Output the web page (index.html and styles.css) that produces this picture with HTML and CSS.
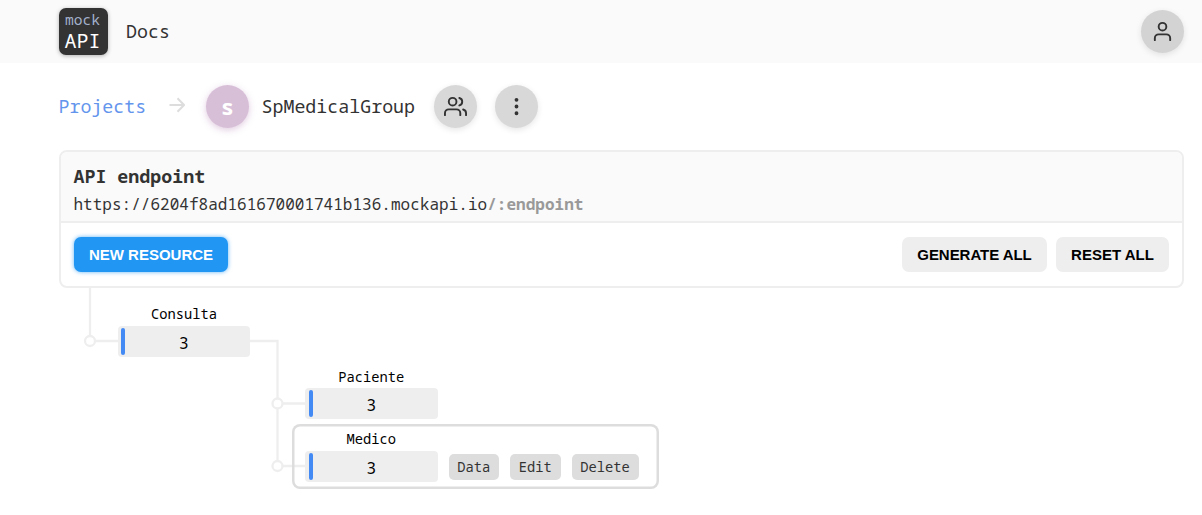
FILE: index.html
```html
<!DOCTYPE html>
<html lang="en">
<head>
<meta charset="utf-8">
<title>mockAPI</title>
<link rel="stylesheet" href="styles.css">
</head>
<body>
<header class="topbar">
  <a class="logo"><span class="logo-mock">mock</span><span class="logo-api">API</span></a>
  <a class="docs">Docs</a>
  <span class="round account">
    <svg width="23" height="23" viewBox="0 0 24 24" class="icon"><path d="M20 21v-2a4 4 0 0 0-4-4H8a4 4 0 0 0-4 4v2"/><circle cx="12" cy="7" r="4"/></svg>
  </span>
</header>
<nav class="crumbs">
  <a class="projects">Projects</a>
  <svg class="arrow" width="16" height="16" viewBox="0 0 16 16"><path d="M0.5 8H15M8.5 1.2L15 8L8.5 14.8"/></svg>
  <span class="round avatar">s</span>
  <span class="project-name">SpMedicalGroup</span>
  <span class="round team">
    <svg width="23" height="23" viewBox="0 0 24 24" class="icon"><path d="M17 21v-2a4 4 0 0 0-4-4H5a4 4 0 0 0-4 4v2"/><circle cx="9" cy="7" r="4"/><path d="M23 21v-2a4 4 0 0 0-3-3.87M16 3.13a4 4 0 0 1 0 7.75"/></svg>
  </span>
  <span class="round more">
    <svg width="23" height="23" viewBox="0 0 24 24" class="icon"><circle cx="12" cy="12" r="1"/><circle cx="12" cy="5" r="1"/><circle cx="12" cy="19" r="1"/></svg>
  </span>
</nav>
<main>
  <section class="panel">
    <div class="endpoint">
      <div class="endpoint-title">API endpoint</div>
      <div class="url">https://6204f8ad161670001741b136.mockapi.io<b>/:endpoint</b></div>
    </div>
    <div class="actions">
      <button class="btn primary">NEW RESOURCE</button>
      <button class="btn generate">GENERATE ALL</button>
      <button class="btn reset">RESET ALL</button>
    </div>
  </section>
  <section class="tree">
    <svg class="wire" width="59" height="70" viewBox="0 0 59 70"><path d="M31 0V48M36 53H59"/><circle cx="31" cy="53" r="5"/></svg>
    <div class="node root"><div class="name">Consulta</div><div class="count">3</div></div>
    <svg class="wire" width="55" height="200" viewBox="0 0 55 200"><path d="M0 53H27.5V110.5M32.5 115.5H55M27.5 120.5V173M32.5 178H55"/><circle cx="27.5" cy="115.5" r="5"/><circle cx="27.5" cy="178" r="5"/></svg>
    <div class="children">
      <div class="node paciente"><div class="name">Paciente</div><div class="count">3</div></div>
      <div class="selected">
        <div class="node"><div class="name">Medico</div><div class="count">3</div></div>
        <button class="tool">Data</button><button class="tool">Edit</button><button class="tool delete">Delete</button>
      </div>
    </div>
  </section>
</main>
</body>
</html>
```

FILE: styles.css
```css
* { box-sizing: border-box; }
body {
  margin: 0;
  background: #fff;
  color: #333;
  font-family: "Noto Sans Mono", "DejaVu Sans Mono", monospace;
  font-size: 18.3px;
}
.topbar {
  height: 63px;
  padding: 0 18px 0 59px;
  background: #fafafa;
  display: flex;
  align-items: center;
}
.logo {
  width: 49px;
  height: 47px;
  border-radius: 7px;
  background: #333;
  box-shadow: 0 1px 4px rgba(0, 0, 0, .3);
  display: flex;
  flex-direction: column;
  align-items: center;
  padding-right: 2px;
}
.logo-mock { font-size: 14.6px; line-height: 19px; margin-top: 2px; color: #a3b1cc; }
.logo-api { font-size: 20px; line-height: 24px; color: #fff; }
.docs { margin: -2px 0 0 18px; }
.round {
  width: 43px;
  height: 43px;
  border-radius: 50%;
  background: #d8d8d8;
  box-shadow: 0 2px 6px rgba(0, 0, 0, .1);
  display: flex;
  align-items: center;
  justify-content: center;
  flex: none;
}
.account { margin-left: auto; background: #d3d3d3; }
.icon {
  fill: none;
  stroke: #333;
  stroke-width: 2;
  stroke-linecap: round;
  stroke-linejoin: round;
}
.crumbs {
  height: 87px;
  padding-left: 58.5px;
  display: flex;
  align-items: center;
}
.projects { color: #6495ed; margin-top: -2px; width: 88px; }
.arrow { margin: -3px 21.5px 0 22px; fill: none; stroke: #ddd; stroke-width: 2; }
.avatar {
  background: #d8bfd8;
  box-shadow: 0 2px 7px rgba(216, 191, 216, .8);
  color: #fff;
  font-weight: bold;
  font-size: 21.5px;
}
.project-name { margin: -2px 0 0 12.5px; width: 172.5px; }
.more { margin-left: 18px; }
.panel {
  width: 1125px;
  height: 138px;
  margin-left: 59px;
  border: 2px solid #eee;
  border-radius: 8px;
  overflow: hidden;
}
.endpoint {
  height: 71px;
  padding: 11px 12.5px 0;
  background: #fafafa;
  border-bottom: 2px solid #eee;
}
.endpoint-title { font-weight: bold; line-height: 26px; }
.url { font-size: 16px; line-height: 30px; letter-spacing: .02px; }
.url b { color: #999; }
.actions { display: flex; padding: 14px 13px; }
.btn {
  height: 35px;
  border: 0;
  padding: 0;
  border-radius: 7px;
  font: bold 15px/35px "Liberation Sans", Arial, sans-serif;
  color: #000;
  background: #eee;
}
.primary { width: 154px; background: #2196f3; color: #fff; box-shadow: 0 0 4px rgba(33, 150, 243, .7); }
.generate { width: 145px; margin-left: auto; letter-spacing: -.05px; }
.reset { width: 113px; margin-left: 9px; }
.tree { display: flex; align-items: flex-start; padding-left: 59px; color: #000; }
.wire { fill: none; stroke: #eee; stroke-width: 2.3; flex: none; }
.node { width: 132.5px; flex: none; }
.root { width: 132px; margin-top: 16.5px; }
.name { height: 21px; line-height: 20px; font-size: 13.75px; text-align: center; }
.root .name, .selected .name { line-height: 18px; }
.count {
  height: 31px;
  border-radius: 4px;
  background: #eee;
  display: grid;
  grid-template: 27px / 4px 1fr 4px;
  padding: 2px 3.5px;
  text-align: center;
  font-size: 16px;
  line-height: 31px;
}
.root .count { padding-left: 3px; }
.count::before { content: ""; border-radius: 2px; background: #448af5; }
.children { display: flex; flex-direction: column; align-items: flex-start; }
.paciente { margin-top: 79px; }
.selected {
  width: 367.5px;
  height: 65px;
  margin: 5px 0 0 -13.5px;
  border-radius: 8px;
  box-shadow: inset 0 0 0 2.5px #ddd;
  padding: 5.5px 0 0 13.5px;
  display: flex;
}
.tool {
  width: 50.5px;
  height: 25.5px;
  margin: 24.5px 0 0 11px;
  padding: 0;
  border: 0;
  border-radius: 5px;
  background: #ddd;
  color: #333;
  font: 13.75px/25px "Noto Sans Mono", "DejaVu Sans Mono", monospace;
}
.delete { width: 67px; }
```
